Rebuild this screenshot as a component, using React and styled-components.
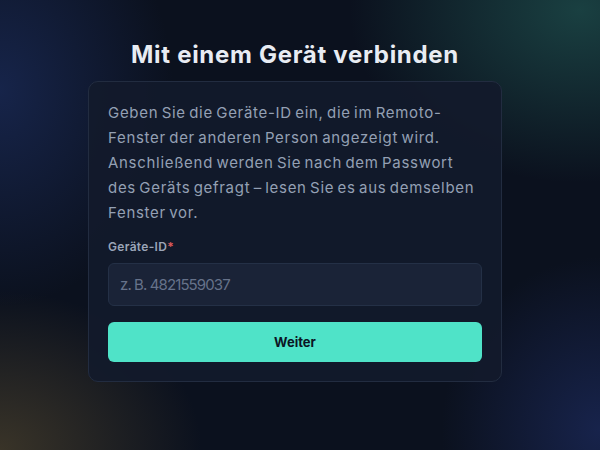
import React from 'react';
import styled, { createGlobalStyle } from 'styled-components';

const GlobalStyle = createGlobalStyle`
  html, body {
    margin: 0;
    padding: 0;
    height: 100%;
  }
  body {
    font-family: Inter, "Noto Sans", sans-serif;
    background: #0b111e;
  }
  * { box-sizing: border-box; }
`;

const Page = styled.main`
  width: 600px;
  height: 450px;
  overflow: hidden;
  padding: 39px 98px 0 88px;
  display: flex;
  flex-direction: column;
  align-items: stretch;
  background:
    radial-gradient(ellipse 320px 240px at 580px 10px, rgba(40, 110, 100, 0.5), transparent 72%),
    radial-gradient(ellipse 240px 300px at 0px 90px, rgba(32, 52, 110, 0.55), transparent 72%),
    radial-gradient(ellipse 280px 220px at 0px 450px, rgba(95, 80, 48, 0.55), transparent 72%),
    radial-gradient(ellipse 220px 240px at 600px 430px, rgba(30, 45, 100, 0.65), transparent 72%),
    #0b111e;
`;

const Title = styled.h1`
  margin: 0 0 10px;
  text-align: center;
  font-size: 24px;
  line-height: 32px;
  font-weight: 700;
  letter-spacing: 0.7px;
  color: #e8ecf3;
`;

const Card = styled.section`
  background: rgba(18, 26, 43, 0.92);
  border: 1px solid #222c40;
  border-radius: 10px;
  padding: 18px 19px 19px;
`;

const Intro = styled.p`
  margin: 0 0 14px;
  font-size: 15px;
  line-height: 25px;
  letter-spacing: 0.7px;
  word-spacing: -1.5px;
  color: #94a0b4;
`;

const Label = styled.label`
  display: block;
  font-size: 12px;
  font-weight: 600;
  line-height: 16px;
  letter-spacing: 0.3px;
  color: #9aa5b8;
  margin-bottom: 8px;
`;

const Required = styled.span`
  color: #e05a5a;
`;

const Input = styled.input`
  display: block;
  width: 100%;
  height: 43px;
  padding: 0 11px;
  border-radius: 6px;
  border: 1px solid #243046;
  background: #1a2337;
  font-family: inherit;
  font-size: 15px;
  letter-spacing: -0.9px;
  color: #e2e8f0;
  outline: none;
  &::placeholder {
    color: #66728a;
  }
`;

const Button = styled.button`
  display: block;
  width: 100%;
  height: 40px;
  margin-top: 16px;
  border: none;
  border-radius: 6px;
  background: #4fe3c8;
  color: #0b1524;
  font-family: inherit;
  font-size: 13px;
  font-weight: 700;
  cursor: pointer;
`;

const App = () => (
  <>
    <GlobalStyle />
    <Page>
      <Title>Mit einem Gerät verbinden</Title>
      <Card>
        <Intro>
          Geben Sie die Geräte-ID ein, die im Remoto-Fenster der anderen Person angezeigt wird.
          Anschließend werden Sie nach dem Passwort des Geräts gefragt – lesen Sie es aus demselben
          Fenster vor.
        </Intro>
        <Label htmlFor="device-id">
          Geräte-ID<Required>*</Required>
        </Label>
        <Input id="device-id" placeholder="z. B. 4821559037" />
        <Button type="button">Weiter</Button>
      </Card>
    </Page>
  </>
);

export default App;
